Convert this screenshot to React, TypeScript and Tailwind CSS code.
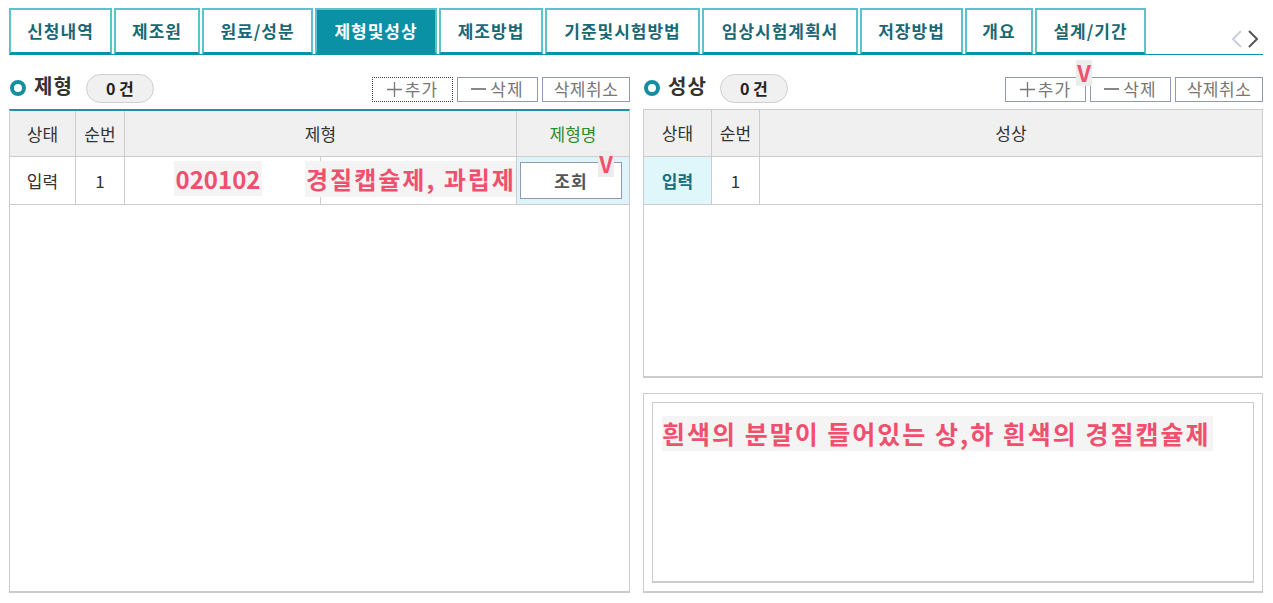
import React from 'react';

const FONT = { fontFamily: '"Noto Sans CJK KR", "Noto Sans", sans-serif' };

const tabs = [
  { label: '신청내역', w: 103 },
  { label: '제조원', w: 86 },
  { label: '원료/성분', w: 111 },
  { label: '제형및성상', w: 122, active: true },
  { label: '제조방법', w: 104 },
  { label: '기준및시험방법', w: 155 },
  { label: '임상시험계획서', w: 156 },
  { label: '저장방법', w: 103 },
  { label: '개요', w: 68 },
  { label: '설계/기간', w: 111 },
];

function Mark({ className }: { className: string }) {
  return (
    <span
      className={`absolute flex h-[26px] w-[16px] items-start justify-center bg-[#ececec] text-[22px] font-bold leading-[24px] text-[#f0506e] ${className}`}
    >
      V
    </span>
  );
}

function PanelHead({ title, focused }: { title: string; focused?: boolean }) {
  return (
    <div className="flex h-[42px] items-center">
      <span className="ml-[1px] h-[16px] w-[16px] rounded-full border-[4px] border-[#158ea0]" />
      <span className="-mt-[4px] ml-[8px] text-[20px] font-bold tracking-[1px] text-[#333]">{title}</span>
      <span className="ml-[13px] flex h-[29px] w-[68px] items-center justify-center rounded-full border border-[#cfcfcf] bg-[#f0f0f0] text-[16px] font-bold text-[#222]">
        0 건
      </span>
      <div className="ml-auto flex gap-[4px] pt-[2px]">
        <button
          className={`flex h-[25px] w-[81px] items-center justify-center gap-[3px] text-[17px] tracking-[1px] text-[#777] ${
            focused ? 'border border-dotted border-[#444]' : 'border border-[#8e9bb3]'
          }`}
        >
          <svg width="15" height="15" viewBox="0 0 15 15">
            <path d="M7.5 0 V15 M0 7.5 H15" stroke="#777" strokeWidth="1.3" />
          </svg>
          추가
        </button>
        <button className="flex h-[25px] w-[81px] items-center justify-center gap-[4px] border border-[#8e9bb3] text-[17px] tracking-[1px] text-[#777]">
          <span className="inline-block h-[2px] w-[15px] bg-[#888]" />삭제
        </button>
        <button className="flex h-[25px] w-[88px] items-center justify-center border border-[#8e9bb3] text-[17px] tracking-[0.5px] text-[#777]">
          삭제취소
        </button>
      </div>
    </div>
  );
}

export default function App() {
  return (
    <div className="relative h-[603px] w-[1273px] overflow-hidden bg-white text-[#333]" style={FONT}>
      {/* TABS */}
      <div className="flex pl-[9px] pt-[8px]">
        <div className="flex w-[1254px] items-end gap-[2px] border-b border-[#0a93a5]">
          {tabs.map((t) => (
            <div
              key={t.label}
              style={{ width: t.w }}
              className={`-mb-[1px] flex h-[47px] items-center justify-center border-2 border-b-[3px] border-[#5cc3ca] border-b-[#0a93a5] text-[17px] font-bold tracking-[1px] ${
                t.active ? 'border-[#0a93a5] bg-[#0a91a6] text-white' : 'bg-white text-[#1a6876]'
              }`}
            >
              {t.label}
            </div>
          ))}
          <div className="ml-auto mb-[6px] mr-[4px] flex items-center gap-[4px]">
            <svg width="12" height="18" viewBox="0 0 12 18">
              <path d="M10 1 L2 9 L10 17" fill="none" stroke="#c9d1dc" strokeWidth="2" />
            </svg>
            <svg width="12" height="18" viewBox="0 0 12 18">
              <path d="M2 1 L10 9 L2 17" fill="none" stroke="#555" strokeWidth="2" />
            </svg>
          </div>
        </div>
      </div>

      {/* PANELS */}
      <div className="flex gap-[13px] pl-[9px] pt-[12px]">
        {/* LEFT */}
        <section className="relative w-[621px]">
          <PanelHead title="제형" focused />
          <div className="h-[484px] border border-t-2 border-b-2 border-[#cccccc] border-t-[#1c93a2]">
            <div className="flex h-[46px] border-b border-[#cccccc] bg-[#f0f0f0] text-[17px]">
              <div className="flex w-[66px] items-center justify-center border-r border-[#cccccc]">상태</div>
              <div className="flex w-[49px] items-center justify-center border-r border-[#cccccc]">순번</div>
              <div className="flex w-[392px] items-center justify-center border-r border-[#cccccc]">제형</div>
              <div className="flex flex-1 items-center justify-center text-[#2f8a2f]">제형명</div>
            </div>
            <div className="relative flex h-[48px] border-b border-[#cccccc] text-[17px]">
              <div className="flex w-[66px] items-center justify-center border-r border-[#cccccc]">입력</div>
              <div className="flex w-[49px] items-center justify-center border-r border-[#cccccc]">1</div>
              <div className="flex w-[392px] border-r border-[#cccccc]">
                <div className="w-[196px] border-r border-[#cccccc]" />
                <div className="flex-1" />
              </div>
              <div className="flex flex-1 items-center bg-[#dff4f9] pl-[3px]">
                <button className="flex h-[37px] w-[102px] items-center justify-center border border-[#8e9bb3] bg-white text-[17px] font-bold tracking-[1px] text-[#555]">
                  조회
                </button>
              </div>
              <span className="absolute left-[164px] top-[4px] flex h-[35px] w-[88px] items-center justify-center bg-[#f4f4f4] text-[24px] font-bold text-[#f0506e]">
                020102
              </span>
              <span className="absolute left-[295px] top-[4px] flex h-[36px] items-center bg-[#f4f4f4] pl-[1px] text-[24px] font-bold tracking-[2px] text-[#f0506e]">
                경질캡슐제, 과립제
              </span>
              <Mark className="left-[588px] -top-[6px]" />
            </div>
          </div>
        </section>

        {/* RIGHT */}
        <section className="relative w-[620px]">
          <PanelHead title="성상" />
          <Mark className="left-[433px] top-[-7px]" />
          <div className="h-[269px] border border-b-2 border-[#cccccc]">
            <div className="flex h-[47px] border-b border-[#cccccc] bg-[#f0f0f0] text-[17px]">
              <div className="flex w-[68px] items-center justify-center border-r border-[#cccccc]">상태</div>
              <div className="flex w-[48px] items-center justify-center border-r border-[#cccccc]">순번</div>
              <div className="flex flex-1 items-center justify-center">성상</div>
            </div>
            <div className="flex h-[48px] border-b border-[#cccccc] text-[17px]">
              <div className="flex w-[68px] items-center justify-center border-r border-[#cccccc] bg-[#dff6fa] font-bold text-[#16707e]">
                입력
              </div>
              <div className="flex w-[48px] items-center justify-center border-r border-[#cccccc]">1</div>
              <div className="flex-1" />
            </div>
          </div>
          <div className="mt-[15px] h-[200px] border border-b-2 border-[#cccccc] p-[8px]">
            <div className="h-full border border-b-2 border-[#cccccc] pl-[9px] pt-[13px]">
              <span className="inline-flex h-[35px] items-center bg-[#f4f4f4] pr-[2px] text-[25px] font-bold tracking-[2px] text-[#f0506e]">
                흰색의 분말이 들어있는 상,하 흰색의 경질캡슐제
              </span>
            </div>
          </div>
        </section>
      </div>
    </div>
  );
}
